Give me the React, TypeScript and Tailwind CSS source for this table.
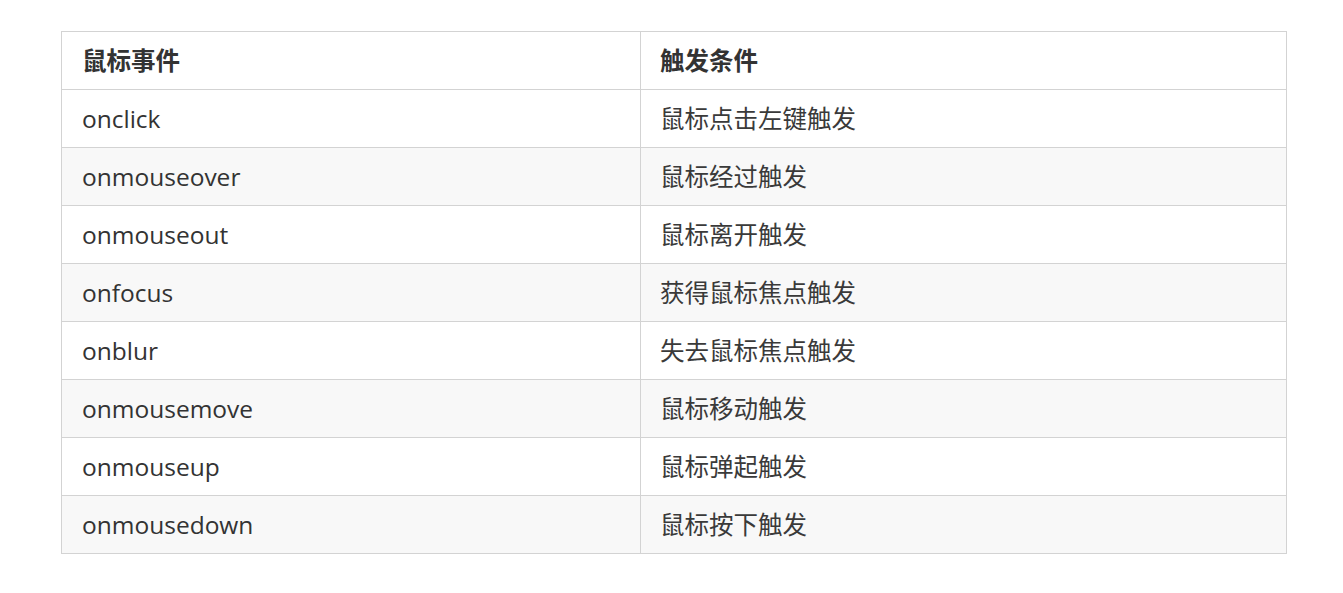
import React from 'react';

const rows: [string, string][] = [
  ['onclick', '鼠标点击左键触发'],
  ['onmouseover', '鼠标经过触发'],
  ['onmouseout', '鼠标离开触发'],
  ['onfocus', '获得鼠标焦点触发'],
  ['onblur', '失去鼠标焦点触发'],
  ['onmousemove', '鼠标移动触发'],
  ['onmouseup', '鼠标弹起触发'],
  ['onmousedown', '鼠标按下触发'],
];

const App: React.FC = () => {
  return (
    <div className="w-[1343px] h-[593px] bg-white pt-[31px] pl-[61px] font-['Open_Sans','Noto_Sans_CJK_SC',sans-serif] text-[#333333]">
      <table className="w-[1226px] border-collapse border border-[#d3d3d3] table-fixed text-[24.5px]">
        <colgroup>
          <col className="w-[579px]" />
          <col />
        </colgroup>
        <thead>
          <tr className="h-[58px]">
            <th className="border border-[#d3d3d3] pl-5 pr-5 pt-[2px] text-left font-bold">鼠标事件</th>
            <th className="border border-[#d3d3d3] pl-[19px] pr-5 pt-[2px] text-left font-bold">触发条件</th>
          </tr>
        </thead>
        <tbody>
          {rows.map(([evt, cond], i) => (
            <tr key={evt} className={i % 2 === 1 ? 'h-[58px] bg-[#f8f8f8]' : 'h-[58px] bg-white'}>
              <td className="border border-[#d3d3d3] pl-5 pr-5 pt-[2px]">{evt}</td>
              <td className="border border-[#d3d3d3] pl-[19px] pr-5 pt-[2px] text-[#3a3a3a]">{cond}</td>
            </tr>
          ))}
        </tbody>
      </table>
    </div>
  );
};

export default App;
